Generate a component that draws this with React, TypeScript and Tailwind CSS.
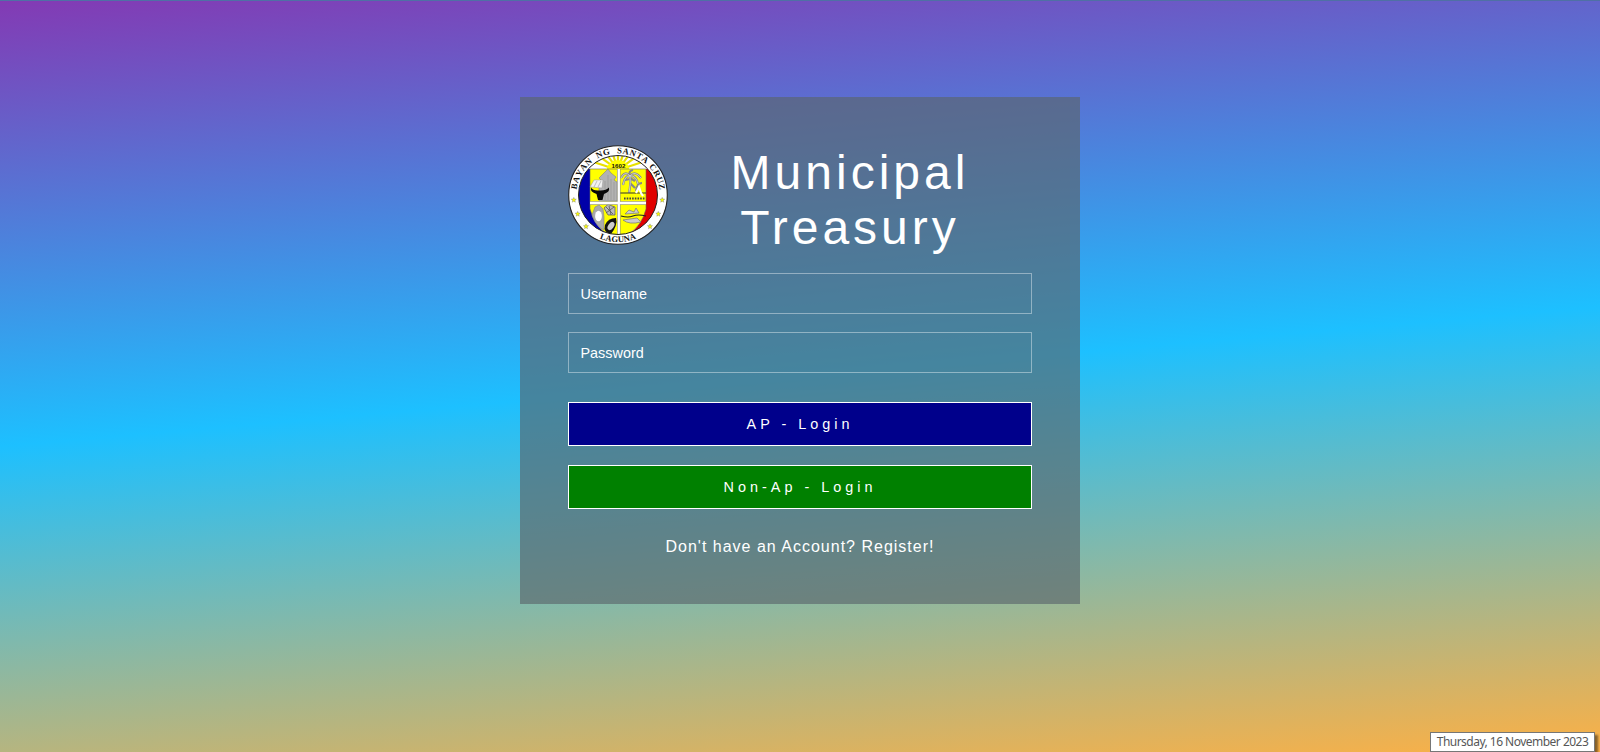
const star = "M0-2.6L.7-.9 2.5-.8 1.1.4 1.5 2.2 0 1.2-1.5 2.2-1.1.4-2.5-.8-.7-.9Z";
const stars: [number, number][] = [[5.8, 55], [9.7, 69], [18, 81.5], [94.2, 55], [90.3, 69], [82, 81.5]];
const rays = [-72, -54, -36, -18, 0, 18, 36, 54, 72];
const motto: [string, number][] = [["BAYAN", 27], ["NG", 56], ["SANTA", 85.4], ["CRUZ", 118]];

function Seal() {
  return (
    <svg viewBox="0 0 100 100" className="size-[100px] shrink-0" role="img">
      <defs>
        <clipPath id="disc"><circle cx="50" cy="50" r="39.5" /></clipPath>
        <path id="topArc" d="M8.3 55V50A41.7 41.7 0 0 1 91.7 50V55" />
        <path id="bottomArc" d="M2.8 50A47.2 47.2 0 0 0 97.2 50" />
      </defs>
      <circle cx="50" cy="50" r="49.3" fill="#fff" stroke="#222" strokeWidth="1.1" />
      <g clipPath="url(#disc)">
        <rect width="100" height="100" fill="#fff" />
        <g stroke="#e8e000" strokeWidth="2.2">
          {rays.map((a) => (
            <path key={a} d="M50 16V-4" transform={`rotate(${a} 50 25)`} />
          ))}
        </g>
        <path d="M39 24a11 9 0 0 1 22 0Z" fill="#ff0" />
        <path d="M0 24h22v66H0z" fill="#0000a8" />
        <path d="M78 24h22v66H78z" fill="#e00000" />
        <path d="M22 60Q27 82 38 88L40 92H10V60Z" fill="#0000a8" />
        <path d="M78 60Q73 82 62 88L60 92H90V60Z" fill="#e00000" />
        <path d="M22 24H78V64Q74 80 61 89Q50 92 39 89Q26 80 22 64Z" fill="#ff0" stroke="#666" strokeWidth=".6" />
        <path d="M31 56V42L34 36 31 33 36 28 40 24 43 28 48 32 46 35 49 37V56Z" fill="#b2b2b2" stroke="#777" strokeWidth=".5" />
        <path d="M22 42 26 35H35L34 43Z" fill="#f2f2f2" stroke="#999" strokeWidth=".5" />
        <path d="M37 36V55M40 30V55M43 34V55M46 37V55" stroke="#8a8a8a" strokeWidth=".5" />
        <path d="M29 36 26 42M33 36 30 42" stroke="#999" strokeWidth=".6" />
        <path d="M23 42.5Q25 46 31 45.5Q38 46 41 42.5Q42 47 36 49L34.5 55H30L28.5 49Q22 47 23 42.5Z" fill="#080808" />
        <path d="M61 48Q63 38 62 31M62 31Q57 25 53 33M62 31Q57 30 55 40M62 31Q67 25 73 33M62 31Q68 30 70 39M62 31Q60 26 65 25M68 46Q69 38 74 38M67 43 62 38M62 34 57 35M62 33 67 36" fill="none" stroke="#888" strokeWidth="2.2" />
        <path d="M61 48Q63 38 62 31M62 31Q57 25 53 33M62 31Q57 30 55 40M62 31Q67 25 73 33M62 31Q68 30 70 39" fill="none" stroke="#ddd" strokeWidth=".8" />
        <path d="M52 48H78" stroke="#333" strokeWidth="1.2" />
        <path d="M68 48 71 42 73 48 75 51" fill="none" stroke="#fff" strokeWidth="2.2" />
        <path d="M56 53.5H77" stroke="#444" strokeWidth="1.8" strokeDasharray="1.6 1.1" />
        <path d="M24 70 27 62 31 60 35 64 36 72 36 85 31 82Q26 77 24 70Z" fill="#aaa" stroke="#888" strokeWidth=".6" />
        <ellipse cx="30.5" cy="71" rx="3.4" ry="5.2" fill="#fff" />
        <path d="M36 63 40 59.5 47 62 47 70 40 70Z" fill="#bbb" stroke="#555" strokeWidth=".7" />
        <path d="M38 62 45 69M41 61 43 70M46 62 38 68" stroke="#555" strokeWidth=".8" />
        <path d="M37 80Q40 73 48 73Q50 80 43 89Q35 88 37 80Z" fill="#111" />
        <ellipse cx="43" cy="81" rx="2.8" ry="4.5" transform="rotate(35 43 81)" fill="#ccc" />
        <path d="M53 71Q60 73 65 71T78 71" fill="none" stroke="#222" strokeWidth="1.2" />
        <path d="M57 69 61 65 66 67 68 63 71 68ZM55 75Q61 80 73 77L69 73Z" fill="#ccc" stroke="#777" strokeWidth=".7" />
        <path d="M50.8 24V91M22 58H78" stroke="#888" strokeWidth="3.4" />
        <path d="M50.8 24V91M22 58H78" stroke="#fff" strokeWidth="2.3" />
      </g>
      <circle cx="50" cy="50" r="39.5" fill="none" stroke="#222" strokeWidth="1" />
      <text x="50.5" y="23" textAnchor="middle" className="font-['Liberation_Sans',sans-serif] text-[6.2px] font-bold" fill="#111">1602</text>
      <g className="font-['Liberation_Serif',serif] text-[8.6px] font-bold tracking-[0.6px] [font-kerning:none]" fill="#111">
        {motto.map(([word, offset]) => (
          <text key={word}>
            <textPath href="#topArc" startOffset={offset} textAnchor="middle">{word}</textPath>
          </text>
        ))}
        <text className="tracking-[0.1px]">
          <textPath href="#bottomArc" startOffset="50%" textAnchor="middle">LAGUNA</textPath>
        </text>
      </g>
      {stars.map(([x, y]) => (
        <path key={`${x}-${y}`} d={star} transform={`translate(${x} ${y})`} fill="#ff0" stroke="#777" strokeWidth=".4" />
      ))}
    </svg>
  );
}

const field =
  "block h-[41px] w-full border border-white/40 bg-transparent px-[11.5px] text-[14.4px] text-white outline-none placeholder:text-white placeholder:opacity-100";
const button = "block h-11 w-full border border-white pt-0.5 text-[14.4px] tracking-[4px] text-white";

export default function App() {
  return (
    <main className="relative flex h-[752px] items-start justify-center overflow-hidden border-t border-[#4f70a5] bg-[linear-gradient(175deg,#833ab4_0%,#1dc0ff_50%,#fcb045_100%)] pt-24 font-['Liberation_Sans',Arial,sans-serif]">
      <form className="h-[507px] w-[560px] bg-[#5a656b]/65 p-12 text-white" onSubmit={(e) => e.preventDefault()}>
        <div className="flex h-[110px]">
          <Seal />
          <h1 className="grow text-center text-[48px] leading-[55px] tracking-[4px]">
            Municipal
            <br />
            Treasury
          </h1>
        </div>
        <div className="mt-[18px] flex flex-col gap-[18px]">
          <input className={field} type="text" placeholder="Username" />
          <input className={field} type="password" placeholder="Password" />
        </div>
        <div className="mt-[29px] flex flex-col gap-[19px]">
          <button type="submit" className={`${button} bg-[#00008b]`}>AP - Login</button>
          <button type="button" className={`${button} bg-[#008000]`}>Non-Ap - Login</button>
        </div>
        <p className="mt-[29px] text-center text-base leading-[18px] tracking-[1px]">
          <a href="#register">Don't have an Account? Register!</a>
        </p>
      </form>
      <div className="absolute right-[5px] bottom-0 flex h-5 w-[165px] items-center justify-center border border-[#767676] bg-white font-['Noto_Sans',sans-serif] text-[12px] tracking-[-0.52px] whitespace-nowrap text-[#575757] shadow-[3px_3px_2px_rgba(0,0,0,0.45)]">
        Thursday, 16 November 2023
      </div>
    </main>
  );
}
